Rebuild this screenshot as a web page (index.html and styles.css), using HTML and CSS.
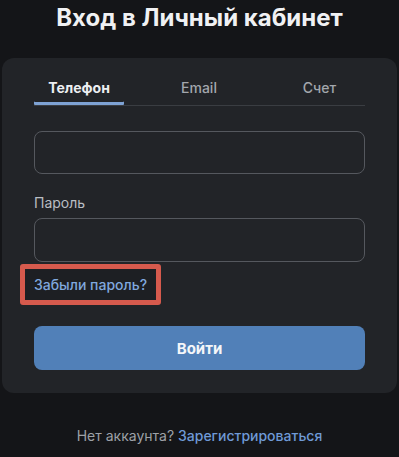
FILE: index.html
```html
<!DOCTYPE html>
<html lang="ru">
<head>
<meta charset="utf-8">
<link rel="stylesheet" href="styles.css">
</head>
<body>
<header class="head">
  <h1 class="title">Вход в Личный кабинет</h1>
</header>
<main class="card">
  <nav class="tabs">
    <div class="tab active">Телефон</div>
    <div class="tab">Email</div>
    <div class="tab">Счет</div>
  </nav>
  <div class="field first"><div class="input"></div></div>
  <div class="field">
    <div class="label">Пароль</div>
    <div class="input"></div>
  </div>
  <div class="forgot-wrap">
    <a class="forgot">Забыли пароль?</a>
  </div>
  <button class="submit">Войти</button>
</main>
<footer class="foot">Нет аккаунта? <a class="reg">Зарегистрироваться</a></footer>
</body>
</html>
```

FILE: styles.css
```css
* { box-sizing: border-box; }
html, body { margin: 0; padding: 0; }
body {
  background: #141518;
  font-family: Inter, "Noto Sans", sans-serif;
  color: #e6e8eb;
  width: 399px;
  height: 457px;
  overflow: hidden;
}
.head { height: 58px; }
.title {
  margin: 0;
  text-align: center;
  font-size: 24px;
  line-height: 36px;
  font-weight: 700;
  color: #f0f1f3;
}
.card {
  margin: 0 2px;
  height: 335px;
  background: #222428;
  border-radius: 12px;
  padding: 13px 32px 0;
}
.tabs {
  display: grid;
  grid-template-columns: 90px 1fr 91px;
  border-bottom: 1px solid #3a3d42;
}
.tab {
  height: 34px;
  display: flex;
  align-items: center;
  justify-content: center;
  font-size: 14px;
  font-weight: 500;
  color: #a3a7ad;
  padding-bottom: 1px;
}
.tab.active {
  color: #eceef1;
  font-weight: 700;
  box-shadow: inset 0 -3px 0 #7ea2d4;
  border-radius: 0 0 1px 1px;
}
.field.first { margin-top: 25px; }
.field.first .input { height: 43px; }
.input {
  height: 44px;
  border: 1px solid #55585e;
  border-radius: 8px;
}
.label {
  margin-top: 19px;
  margin-bottom: 5px;
  font-size: 14px;
  line-height: 20px;
  color: #b9bdc3;
}
.forgot-wrap {
  margin: 2px 0 0 -14px;
  width: 141px;
  height: 41px;
  border: 5px solid #d65a4d;
  border-radius: 3px;
  background: #1d1f23;
  display: flex;
  align-items: center;
  padding-left: 9px;
}
.forgot {
  font-size: 14px;
  font-weight: 500;
  color: #80a8de;
  text-decoration: none;
  white-space: nowrap;
}
.submit {
  display: block;
  margin-top: 21px;
  width: 100%;
  height: 44px;
  border: 0;
  border-radius: 8px;
  background: #5180b8;
  color: #f4f6f9;
  font-family: inherit;
  font-size: 15px;
  font-weight: 700;
}
.foot {
  margin-top: 33px;
  text-align: center;
  font-size: 14px;
  line-height: 20px;
  color: #9da1a7;
}
.reg {
  color: #6f9ad6;
  font-weight: 500;
  text-decoration: none;
}
```
